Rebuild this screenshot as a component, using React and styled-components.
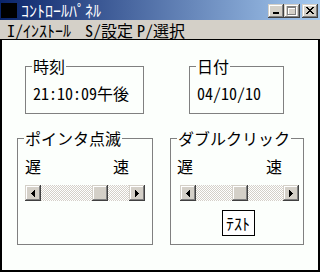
import React from 'react';
import styled, { createGlobalStyle } from 'styled-components';

const FONT = `"Noto Sans Mono CJK JP", "Noto Sans CJK JP", sans-serif`;

const Global = createGlobalStyle`
  * { box-sizing: border-box; }
  html, body { margin: 0; padding: 0; background: #fff; }
  body { width: 320px; height: 272px; overflow: hidden; }
`;

const Window = styled.div`
  width: 320px;
  height: 272px;
  display: flex;
  flex-direction: column;
  font-family: ${FONT};
  font-feature-settings: "hwid" 1;
  font-size: 16px;
  line-height: 16px;
  color: #000;
`;

const TitleBar = styled.div`
  height: 20px;
  display: flex;
  align-items: center;
  padding: 0 2px 0 1px;
  background: linear-gradient(to right, #0a246a, #a6caf0);
`;

const AppIcon = styled.div`
  width: 16px;
  height: 15px;
  margin-top: 1px;
  background: #000;
`;

const Title = styled.div`
  flex: 1;
  color: #fff;
  margin-left: 4px;
  line-height: 16px;
  white-space: nowrap;
`;

const CaptionButtons = styled.div`
  display: flex;
  margin-top: 1px;
`;

const CaptionButton = styled.div`
  width: 16px;
  height: 14px;
  margin-left: ${p => p.$gap || 0}px;
  background: #d4d0c8;
  box-shadow: inset -1px -1px #404040, inset 1px 1px #d4d0c8,
    inset -2px -2px #808080, inset 2px 2px #fff;
  display: flex;
  align-items: center;
  justify-content: center;
  svg { display: block; shape-rendering: crispEdges; }
`;

const MenuBar = styled.div`
  height: 20px;
  display: flex;
  align-items: center;
  padding-left: 7px;
  background: #d4d0c8;
  border-bottom: 1px solid #000;
`;

const MenuItem = styled.div`
  width: ${p => (p.$w ? `${p.$w}px` : 'auto')};
  flex: none;
  white-space: nowrap;
  line-height: 16px;
  u { text-decoration: underline; text-underline-offset: 2px; }
`;

const Content = styled.div`
  flex: 1;
  background: #fcfffc;
  border: 2px solid #000;
  border-top: none;
  display: flex;
  flex-direction: column;
`;

const Row = styled.div`
  display: flex;
  align-items: stretch;
  margin-top: ${p => p.$top}px;
  padding-left: ${p => p.$left}px;
  gap: ${p => p.$gap}px;
`;

const Group = styled.fieldset`
  margin: 0;
  padding: 0;
  width: ${p => p.$w}px;
  border: 1px solid #808080;
  min-width: 0;
  display: flex;
  flex-direction: column;
`;

const Legend = styled.legend`
  padding: 0 1px;
  margin-left: 6px;
  line-height: 16px;
  white-space: nowrap;
`;

const ValueBody = styled.div`
  padding: 11px 0 12px 7px;
  white-space: nowrap;
`;

const SliderBody = styled.div`
  flex: 1;
  display: flex;
  flex-direction: column;
  padding: 12px ${p => p.$right}px 8px ${p => p.$left}px;
`;

const Labels = styled.div`
  display: flex;
  justify-content: space-between;
  padding-right: ${p => p.$right}px;
  margin-right: -${p => p.$bodyRight}px;
`;

const ScrollBar = styled.div`
  height: 16px;
  margin-top: 11px;
  margin-left: ${p => p.$indent || 0}px;
  display: flex;
`;

const RaisedBox = styled.div`
  width: 16px;
  height: 16px;
  flex: none;
  background: #d4d0c8;
  box-shadow: inset -1px -1px #404040, inset 1px 1px #d4d0c8,
    inset -2px -2px #808080, inset 2px 2px #fff;
  display: flex;
  align-items: center;
  justify-content: center;
  svg { display: block; shape-rendering: crispEdges; }
`;

const Track = styled.div`
  flex: 1;
  display: flex;
  background: repeating-conic-gradient(#d4d0c8 0 25%, #ffffff 0 50%) 0 0 / 2px 2px;
`;

const Thumb = styled(RaisedBox)`
  margin-left: ${p => p.$pos}px;
`;

const TestButton = styled.div`
  align-self: center;
  margin-top: 9px;
  width: 33px;
  height: 26px;
  border: 1px solid #000;
  background: #fff;
  display: flex;
  align-items: center;
  justify-content: center;
  white-space: nowrap;
`;

const LeftArrow = () => (
  <svg width="4" height="7" viewBox="0 0 4 7">
    <path d="M3 0h1v7h-1zM2 1h1v5h-1zM1 2h1v3h-1zM0 3h1v1h-1z" fill="#000" />
  </svg>
);
const RightArrow = () => (
  <svg width="4" height="7" viewBox="0 0 4 7">
    <path d="M0 0h1v7h-1zM1 1h1v5h-1zM2 2h1v3h-1zM3 3h1v1h-1z" fill="#000" />
  </svg>
);

const Slider = ({ pos, indent }) => (
  <ScrollBar $indent={indent}>
    <RaisedBox><LeftArrow /></RaisedBox>
    <Track>
      <Thumb $pos={pos} />
    </Track>
    <RaisedBox><RightArrow /></RaisedBox>
  </ScrollBar>
);

export default function App() {
  return (
    <Window>
      <Global />
      <TitleBar>
        <AppIcon />
        <Title>ｺﾝﾄﾛｰﾙﾊﾟﾈﾙ</Title>
        <CaptionButtons>
          <CaptionButton>
            <svg width="8" height="7" viewBox="0 0 8 7">
              <rect x="1" y="5" width="6" height="2" fill="#000" />
            </svg>
          </CaptionButton>
          <CaptionButton>
            <svg width="10" height="10" viewBox="0 0 10 10">
              <path d="M1 1h9v9h-9z M2 3v6h7v-6z" fill="#fff" fillRule="evenodd" />
              <path d="M0 0h9v9h-9z M1 2v6h7v-6z" fill="#808080" fillRule="evenodd" />
            </svg>
          </CaptionButton>
          <CaptionButton $gap={2}>
            <svg width="8" height="7" viewBox="0 0 8 7">
              <path d="M0 0h2v1h-2zM6 0h2v1h-2zM1 1h2v1h-2zM5 1h2v1h-2zM2 2h4v1h-4zM3 3h2v1h-2zM2 4h4v1h-4zM1 5h2v1h-2zM5 5h2v1h-2zM0 6h2v1h-2zM6 6h2v1h-2z" fill="#000" />
            </svg>
          </CaptionButton>
        </CaptionButtons>
      </TitleBar>
      <MenuBar>
        <MenuItem $w={78}><u>I</u>/ｲﾝｽﾄｰﾙ</MenuItem>
        <MenuItem $w={52}><u>S</u>/設定</MenuItem>
        <MenuItem><u>P</u>/選択</MenuItem>
      </MenuBar>
      <Content>
        <Row $top={18} $left={23} $gap={45}>
          <Group $w={119}>
            <Legend>時刻</Legend>
            <ValueBody>21:10:09午後</ValueBody>
          </Group>
          <Group $w={95}>
            <Legend>日付</Legend>
            <ValueBody>04/10/10</ValueBody>
          </Group>
        </Row>
        <Row $top={16} $left={15} $gap={17}>
          <Group $w={136}>
            <Legend>ポインタ点滅</Legend>
            <SliderBody $left={7} $right={7}>
              <Labels $right={23} $bodyRight={7}>
                <span>遅</span>
                <span>速</span>
              </Labels>
              <Slider pos={51} />
            </SliderBody>
          </Group>
          <Group $w={134}>
            <Legend>ダブルクリック</Legend>
            <SliderBody $left={6} $right={4}>
              <Labels $right={21} $bodyRight={4}>
                <span>遅</span>
                <span>速</span>
              </Labels>
              <Slider pos={36} indent={3} />
              <TestButton>ﾃｽﾄ</TestButton>
            </SliderBody>
          </Group>
        </Row>
      </Content>
    </Window>
  );
}
